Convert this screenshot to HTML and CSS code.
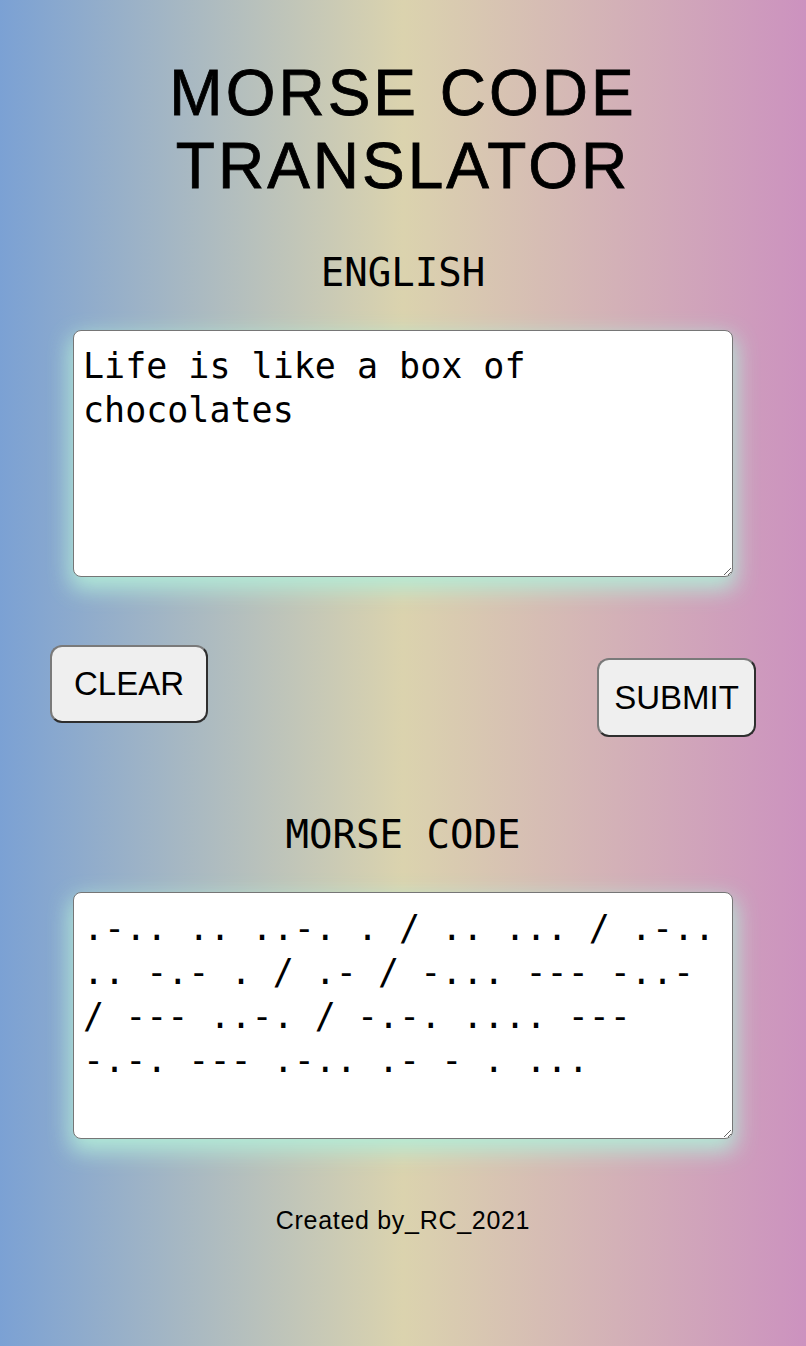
FILE: index.html
```html
<!DOCTYPE html>
<html lang="en">
<head>
<meta charset="utf-8">
<title>Morse Code Translator</title>
<link rel="stylesheet" href="styles.css">
</head>
<body>
<main class="page">
  <h1 class="title">MORSE CODE<br>TRANSLATOR</h1>
  <section class="panel">
    <h2 class="label">ENGLISH</h2>
    <textarea class="box" spellcheck="false">Life is like a box of chocolates</textarea>
  </section>
  <div class="actions">
    <button class="btn btn-clear" type="button">CLEAR</button>
    <button class="btn btn-submit" type="button">SUBMIT</button>
  </div>
  <section class="panel panel-morse">
    <h2 class="label">MORSE CODE</h2>
    <textarea class="box" spellcheck="false">.-.. .. ..-. . / .. ... / .-.. .. -.- . / .- / -... --- -..- / --- ..-. / -.-. .... --- -.-. --- .-.. .- - . ...</textarea>
  </section>
  <footer class="credit">Created by_RC_2021</footer>
</main>
</body>
</html>
```

FILE: styles.css
```css
html, body {
  margin: 0;
  padding: 0;
}

body {
  min-height: 100vh;
  background: linear-gradient(to right, #7ba1d4 0%, #dbd3ae 50%, #cc92bf 100%);
  color: #000;
  font-family: "Liberation Sans", Arial, sans-serif;
}

.page {
  display: flex;
  flex-direction: column;
  align-items: center;
  padding-top: 57px;
  padding-bottom: 80px;
}

.title {
  margin: 0;
  font-family: "Liberation Sans", Arial, sans-serif;
  font-weight: 400;
  font-size: 64px;
  line-height: 73px;
  letter-spacing: 3px;
  text-align: center;
  -webkit-text-stroke: 0.8px #000;
}

.panel {
  display: flex;
  flex-direction: column;
  align-items: center;
  margin-top: 46px;
}

.panel-morse {
  margin-top: 74px;
}

.label {
  margin: 0 0 33px 0;
  font-family: "DejaVu Sans Mono", monospace;
  font-weight: 400;
  font-size: 39px;
  line-height: 48px;
  height: 48px;
}

.box {
  box-sizing: border-box;
  width: 660px;
  height: 247px;
  margin: 0;
  padding: 13px 8px 11px 9px;
  border: 1px solid #767676;
  border-radius: 8px;
  background: #fff;
  font-family: "DejaVu Sans Mono", monospace;
  font-size: 35px;
  line-height: 44px;
  color: #000;
  overflow: hidden;
  box-shadow: 0 9px 22px 3px rgba(178, 236, 216, 0.95);
  outline: none;
}

.actions {
  box-sizing: border-box;
  width: 100%;
  display: flex;
  justify-content: space-between;
  align-items: flex-start;
  padding: 0 50px;
  margin-top: 68px;
}

.btn {
  box-sizing: border-box;
  height: 78px;
  border: 2px solid;
  border-color: #7a7a7a #2e2e2e #2e2e2e #7a7a7a;
  border-radius: 12px;
  background: #efefef;
  color: #000;
  font-family: "Liberation Sans", Arial, sans-serif;
  font-size: 33px;
  padding: 0;
  cursor: pointer;
}

.btn-clear {
  width: 158px;
}

.btn-submit {
  width: 159px;
  height: 79px;
  margin-top: 13px;
}

.credit {
  margin-top: 66px;
  font-family: "Liberation Sans", Arial, sans-serif;
  font-size: 25px;
  line-height: 30px;
  letter-spacing: 0.7px;
}
```
